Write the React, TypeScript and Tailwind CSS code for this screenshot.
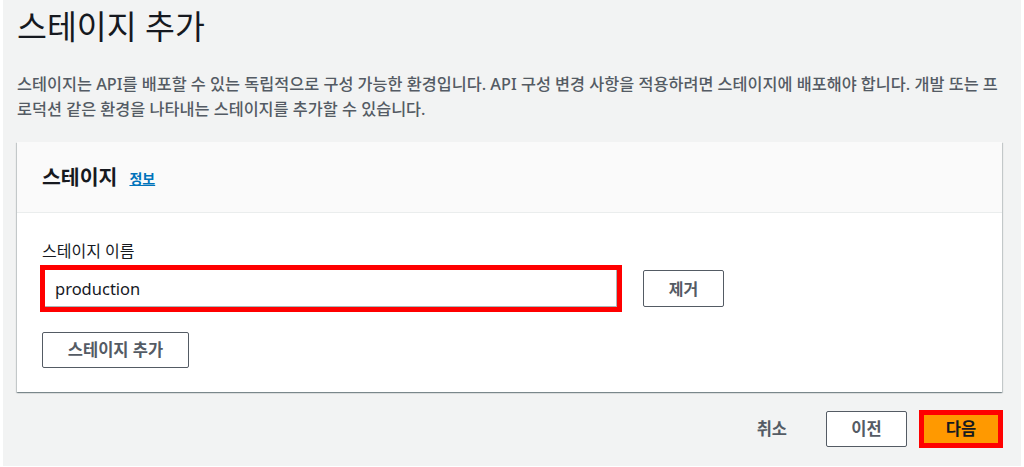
const font = { fontFamily: '"Noto Sans", "Noto Sans CJK KR", sans-serif' };

export default function App() {
  return (
    <div className="h-[467px] w-[1024px] bg-white pl-[3px] pr-[3px] pb-[1px]" style={font}>
      <div className="h-full bg-[#f2f3f3] pl-[14px] pr-[19px] pt-[9px]">
        {/* 페이지 제목 */}
        <h1 className="text-[32.5px] leading-[36px] font-normal text-[#16191f]">스테이지 추가</h1>
        <p className="mt-[27px] text-[16.3px] leading-[25px] font-medium text-[#545b64] whitespace-nowrap">
          스테이지는 API를 배포할 수 있는 독립적으로 구성 가능한 환경입니다. API 구성 변경 사항을 적용하려면 스테이지에 배포해야 합니다. 개발 또는 프
          <br />
          로덕션 같은 환경을 나타내는 스테이지를 추가할 수 있습니다.
        </p>

        {/* 스테이지 카드 */}
        <div className="mt-[20px] bg-white shadow-[0_1px_1px_0_rgba(0,28,36,0.3),1px_1px_1px_0_rgba(0,28,36,0.15),-1px_1px_1px_0_rgba(0,28,36,0.15)]">
          <div className="flex h-[71px] items-center border-b border-[#eaeded] bg-[#fafafa] px-[25px]">
            <h2 className="text-[20.5px] font-bold text-[#16191f]">스테이지</h2>
            <a className="ml-[12px] mt-[2px] text-[14px] font-bold text-[#0073bb] underline">정보</a>
          </div>
          <div className="px-[23px] pt-[28px] pb-[24px]">
            <label className="block pl-[2px] text-[16px] leading-[20px] text-[#16191f]">스테이지 이름</label>
            <div className="mt-[4px] flex items-center">
              <div className="h-[47px] w-[582px] border-[5px] border-[#ff0000]">
                <input
                  readOnly
                  value="production"
                  className="h-full w-full border-r border-b border-[#aab7b8] bg-white pl-[10px] text-[16.5px] text-[#16191f] outline-none"
                  style={font}
                />
              </div>
              <button className="ml-[21px] h-[37px] w-[81px] rounded-[2px] border border-[#545b64] bg-white text-[16px] font-bold text-[#545b64]">
                제거
              </button>
            </div>
            <button className="mt-[20px] ml-[2px] h-[36px] w-[147px] rounded-[2px] border border-[#545b64] bg-white text-[16.5px] font-bold text-[#545b64]">
              스테이지 추가
            </button>
          </div>
        </div>

        {/* 하단 버튼 */}
        <div className="mt-[18px] flex items-center justify-end">
          <span className="mr-[39px] text-[16.5px] font-bold text-[#545b64]">취소</span>
          <button className="h-[36px] w-[81px] rounded-[2px] border border-[#545b64] bg-white text-[16.5px] font-bold text-[#545b64]">
            이전
          </button>
          <button className="ml-[12px] -mr-[1px] h-[38px] w-[84px] border-[5px] border-[#ff0000] bg-[#ff9900] text-[16.5px] font-bold text-[#16191f]">
            다음
          </button>
        </div>
      </div>
    </div>
  );
}
